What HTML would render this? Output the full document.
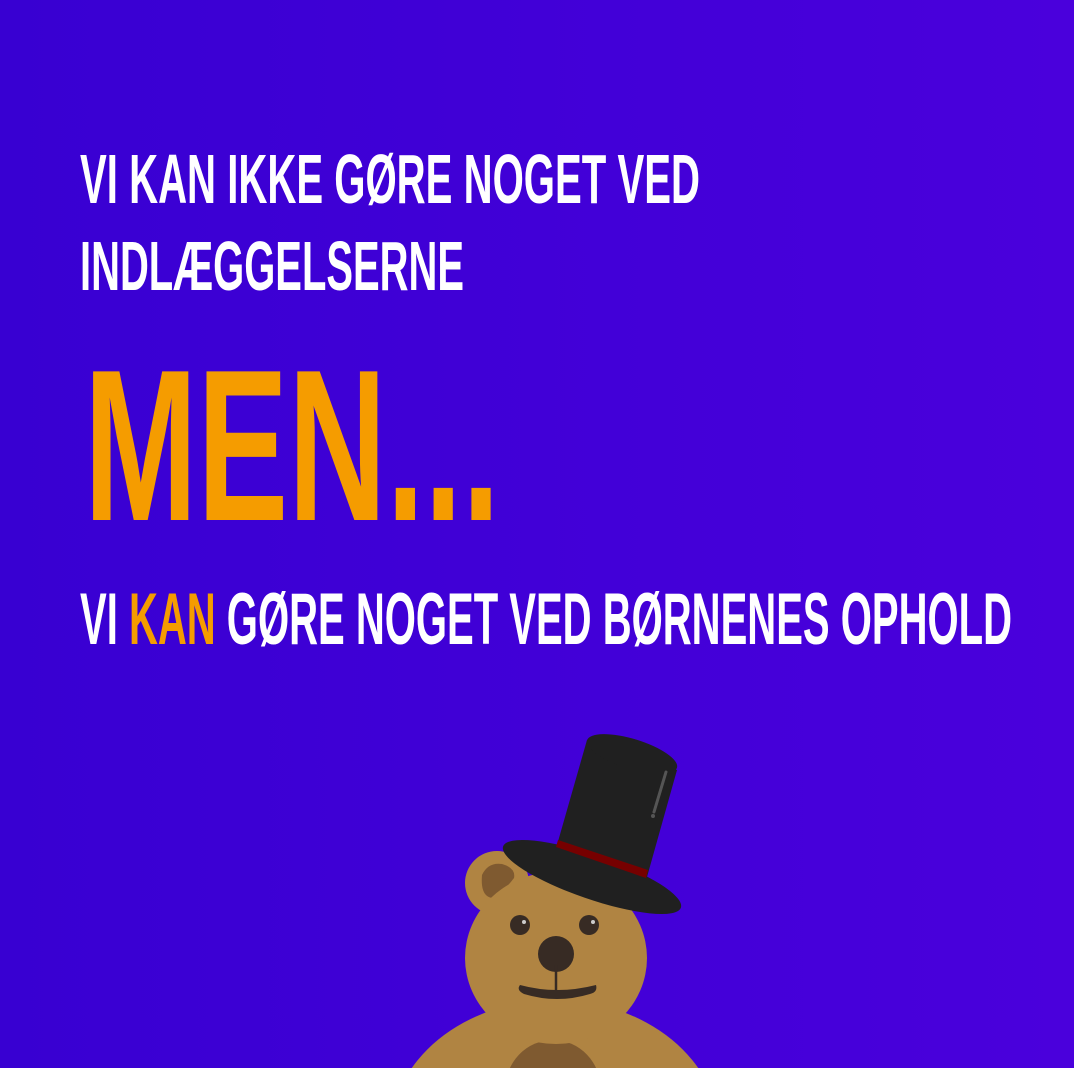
<!DOCTYPE html>
<html><head><meta charset="utf-8"><style>
html,body{margin:0;padding:0;width:1074px;height:1068px;overflow:hidden;}
body{background:linear-gradient(90deg,#3800d2,#4a00dc);}
svg{display:block}
text{font-family:"Liberation Sans",sans-serif;font-weight:bold;}
</style></head><body>
<svg width="1074" height="1068" viewBox="0 0 1074 1068">
<text x="80" y="203" font-size="70" fill="#fff" textLength="620" lengthAdjust="spacingAndGlyphs">VI KAN IKKE GØRE NOGET VED</text>
<text x="80" y="290" font-size="70" fill="#fff" textLength="384" lengthAdjust="spacingAndGlyphs">INDLÆGGELSERNE</text>
<text x="84" y="520" font-size="216" fill="#f59c00" textLength="416" lengthAdjust="spacingAndGlyphs">MEN...</text>
<text x="80" y="644" font-size="73" fill="#fff" textLength="932" lengthAdjust="spacingAndGlyphs">VI <tspan fill="#f59c00">KAN</tspan> GØRE NOGET VED BØRNENES OPHOLD</text>
<!-- bear -->
<ellipse cx="555" cy="1135" rx="165" ry="135" fill="#b08442"/>
<ellipse cx="553" cy="1090" rx="48" ry="50" fill="#7f5a30"/>
<circle cx="497" cy="883" r="32" fill="#b08442"/>
<path d="M482 875 Q488 862 502 864 Q516 868 514 878 Q505 890 494 898 Q480 898 482 875Z" fill="#7f5a30"/>
<ellipse cx="556" cy="958" rx="91" ry="86" fill="#b08442"/>
<circle cx="520" cy="925" r="10" fill="#372b24"/>
<circle cx="589" cy="925" r="10" fill="#372b24"/>
<circle cx="524" cy="922" r="2" fill="#ccc"/><circle cx="593" cy="922" r="2" fill="#ccc"/>
<circle cx="556" cy="954" r="18" fill="#372b24"/>
<line x1="556" y1="965" x2="556" y2="990" stroke="#372b24" stroke-width="2.5"/>
<path d="M520 985 Q557 995 596 985 Q598 992 590 994 Q557 1004 524 994 Q516 990 520 985Z" fill="#372b24"/>
<!-- hat -->
<ellipse cx="592" cy="877" rx="94" ry="22" transform="rotate(19 592 877)" fill="#202020"/>
<path d="M587 740 L557 845 L647 877 L677 770Z" fill="#202020"/>
<ellipse cx="632" cy="754" rx="47" ry="15" transform="rotate(17 632 754)" fill="#202020"/>
<path d="M558 840 L648 870 L646 878 L556 847Z" fill="#760000"/>
<line x1="666" y1="772" x2="654" y2="812" stroke="#555" stroke-width="3" stroke-linecap="round"/>
<circle cx="653" cy="816" r="2" fill="#555"/>
</svg>
</body></html>
